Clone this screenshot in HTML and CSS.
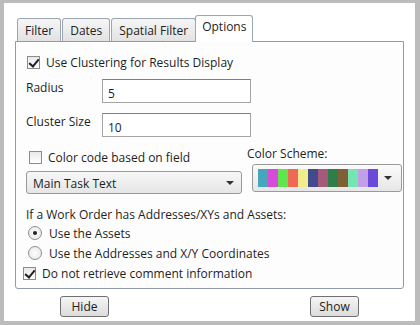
FILE: index.html
```html
<!DOCTYPE html>
<html>
<head>
  <meta charset="UTF-8">
  <title>Options</title>
  <link rel="stylesheet" href="styles.css">
</head>
<body>
  <div class="frame">
    <div class="tabs">
      <div class="tab">Filter</div>
      <div class="tab">Dates</div>
      <div class="tab">Spatial Filter</div>
      <div class="tab active">Options</div>
    </div>
    <div class="panel">
      <label class="check first"><span class="box checked"></span>Use Clustering for Results Display</label>
      <div class="field">
        <span class="field-label">Radius</span>
        <div class="input">5</div>
      </div>
      <div class="field">
        <span class="field-label">Cluster Size</span>
        <div class="input">10</div>
      </div>
      <div class="color-row">
        <div class="color-left">
          <label class="check code"><span class="box"></span>Color code based on field</label>
          <div class="combo">Main Task Text<span class="arrow"></span></div>
        </div>
        <div class="color-right">
          <div class="scheme-label">Color Scheme:</div>
          <div class="scheme">
            <div class="swatches">
              <span style="background:#46a7bc"></span>
              <span style="background:#d84bd9"></span>
              <span style="background:#5fe54e"></span>
              <span style="background:#ef6a55"></span>
              <span style="background:#f2ed8c"></span>
              <span style="background:#424a8e"></span>
              <span style="background:#a55a7c"></span>
              <span style="background:#2f7d48"></span>
              <span style="background:#7f5f35"></span>
              <span style="background:#73e6b3"></span>
              <span style="background:#c39fe8"></span>
              <span style="background:#6a4adb"></span>
            </div>
            <span class="arrow"></span>
          </div>
        </div>
      </div>
      <div class="question">If a Work Order has Addresses/XYs and Assets:</div>
      <label class="radio"><span class="dot on"></span>Use the Assets</label>
      <label class="radio"><span class="dot"></span>Use the Addresses and X/Y Coordinates</label>
      <label class="check last"><span class="box checked"></span>Do not retrieve comment information</label>
    </div>
    <div class="buttons">
      <button class="btn">Hide</button>
      <button class="btn">Show</button>
    </div>
  </div>
</body>
</html>
```

FILE: styles.css
```css
body {
  margin: 0;
  font-family: "Open Sans", "Noto Sans", sans-serif;
  font-size: 12px;
  color: #1e1e1e;
  background: #fff;
}

.frame {
  width: 420px;
  height: 325px;
  box-sizing: border-box;
  border-style: solid;
  border-color: #bcbcbc;
  border-width: 3px 5px 4px 4px;
  background: #fff;
  padding: 11px 11px 0 11px;
}

.tabs {
  display: flex;
  align-items: flex-end;
  padding-left: 2px;
  height: 27px;
}

.tab {
  height: 23px;
  box-sizing: border-box;
  padding: 3px 7px 0 7px;
  border: 1px solid #9aa6b2;
  border-bottom: none;
  border-radius: 3px 3px 0 0;
  background: linear-gradient(#f6f6f6, #e2e2e2);
  margin-right: 1px;
  color: #222;
}

.tab.active {
  height: 27px;
  background: #fff;
  padding: 2px 6px 0 6px;
  margin-left: -2px;
  position: relative;
  top: 1px;
  z-index: 1;
}

.panel {
  border: 1px solid #8e9baa;
  border-radius: 0 0 3px 3px;
  background: #fdfdfd;
  height: 248px;
  box-sizing: border-box;
  padding: 12px 10px 0 10px;
}

.check, .radio {
  display: flex;
  align-items: center;
  height: 16px;
}

.box {
  width: 11px;
  height: 11px;
  border: 1px solid #8c8c8c;
  background: linear-gradient(#e9e9e9, #fff);
  margin-right: 6px;
  position: relative;
}

.box.checked::after {
  content: "";
  position: absolute;
  left: 3px;
  top: 0px;
  width: 4px;
  height: 8px;
  border: solid #222;
  border-width: 0 2px 2px 0;
  transform: rotate(40deg);
}

.check.first {
  margin-left: 1px;
}

.field {
  display: flex;
  align-items: flex-start;
  margin-top: 9px;
}

.field + .field {
  margin-top: 10px;
}

.field-label {
  width: 76px;
}

.input {
  width: 149px;
  height: 24px;
  box-sizing: border-box;
  border: 1px solid #a4a4a4;
  border-top-color: #7f7f7f;
  background: #fff;
  padding: 5px 5px 0 5px;
}

.color-row {
  display: flex;
  justify-content: space-between;
  margin-top: 8px;
}

.color-left {
  width: 216px;
}

.check.code {
  margin-left: 3px;
  height: 19px;
  margin-top: 3px;
}

.combo {
  margin-top: 4px;
  height: 23px;
  box-sizing: border-box;
  border: 1px solid #9a9a9a;
  border-radius: 3px;
  background: linear-gradient(#f7f7f7, #e6e6e6);
  padding: 3px 0 0 6px;
  position: relative;
}

.arrow {
  position: absolute;
  right: 7px;
  top: 9px;
  border-left: 4px solid transparent;
  border-right: 4px solid transparent;
  border-top: 4px solid #333;
}

.color-right {
  width: 150px;
  margin-right: -9px;
}

.scheme-label {
  margin-left: -5px;
  height: 19px;
}

.scheme {
  height: 28px;
  box-sizing: border-box;
  border: 1px solid #9a9a9a;
  border-radius: 3px;
  background: linear-gradient(#fbfbfb, #e6e6e6);
  position: relative;
  padding: 4px 5px;
}

.scheme .arrow {
  right: 9px;
  top: 11px;
}

.swatches {
  display: flex;
  height: 18px;
}

.swatches span {
  width: 10px;
}

.question {
  margin-top: 12px;
  height: 17px;
}

.radio {
  margin-left: 2px;
  height: 20px;
}

.dot {
  width: 12px;
  height: 12px;
  border: 1px solid #8f8f8f;
  border-radius: 50%;
  background: radial-gradient(#fff, #e4e4e4);
  margin-right: 7px;
  position: relative;
}

.dot.on::after {
  content: "";
  position: absolute;
  left: 4px;
  top: 4px;
  width: 4px;
  height: 4px;
  border-radius: 50%;
  background: #222;
}

.check.last {
  margin-top: 2px;
  margin-left: -3px;
}

.buttons {
  display: flex;
  padding: 7px 0 0 45px;
}

.btn {
  width: 49px;
  height: 21px;
  font: inherit;
  color: #222;
  border: 1px solid #707070;
  border-radius: 3px;
  background: linear-gradient(#f5f5f5, #dcdcdc);
  padding: 0;
}

.btn + .btn {
  margin-left: 201px;
}
```
